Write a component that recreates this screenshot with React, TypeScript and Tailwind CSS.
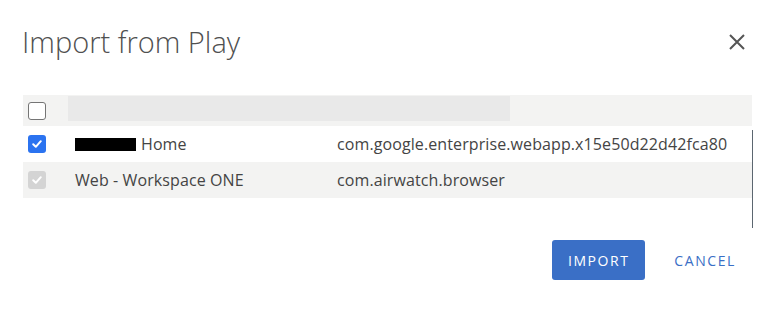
import React from 'react';

const CheckBox: React.FC<{ state: 'empty' | 'checked' | 'disabled' }> = ({ state }) => {
  if (state === 'empty') {
    return <span className="block w-[18px] h-[18px] rounded-[3px] border-[1.5px] border-[#757575] bg-white" />;
  }
  const bg = state === 'checked' ? 'bg-[#2b73f0]' : 'bg-[#d4d4d4]';
  return (
    <span className={`flex items-center justify-center w-[18px] h-[18px] rounded-[3px] ${bg}`}>
      <svg width="12" height="12" viewBox="0 0 12 12" fill="none">
        <path d="M2.2 6.3 L4.8 8.8 L9.8 3.2" stroke="white" strokeWidth="2" strokeLinecap="round" strokeLinejoin="round" />
      </svg>
    </span>
  );
};

const rows = [
  { state: 'checked' as const, redacted: true, name: 'Home', pkg: 'com.google.enterprise.webapp.x15e50d22d42fca80', bg: 'bg-white' },
  { state: 'disabled' as const, redacted: false, name: 'Web - Workspace ONE', pkg: 'com.airwatch.browser', bg: 'bg-[#f3f3f2]' },
];

export default function App() {
  return (
    <div
      className="w-[782px] h-[312px] bg-white text-[#444] overflow-hidden"
      style={{ fontFamily: '"Open Sans", "Liberation Sans", sans-serif' }}
    >
      <div className="flex items-center justify-between pl-[22px] pr-[36px] pt-[20px] h-[62px]">
        <h1 className="text-[29px] font-light text-[#505050] leading-none">Import from Play</h1>
        <svg width="18" height="18" viewBox="0 0 18 18" className="mt-[1px]">
          <path d="M2 2 L16 16 M16 2 L2 16" stroke="#555" strokeWidth="2" />
        </svg>
      </div>

      <div className="flex items-start ml-[23px] mt-[33px]">
        <div className="w-[729px]">
          <div className="flex h-[31px] bg-[#f3f3f2]">
            <div className="w-[45px] flex items-center pl-[5px]">
              <CheckBox state="empty" />
            </div>
            <div className="w-[442px] h-[25px] mt-[1px] bg-[#e9e9e9]" />
          </div>
          {rows.map((r) => (
            <div key={r.pkg} className={`flex items-center h-[36px] text-[16px] tracking-[0.1px] ${r.bg}`}>
              <div className="w-[52px] flex items-center pl-[5px]">
                <CheckBox state={r.state} />
              </div>
              <div className="w-[262px] flex items-center">
                {r.redacted && <span className="inline-block w-[61px] h-[13px] bg-black mr-[5px]" />}
                <span>{r.name}</span>
              </div>
              <div>{r.pkg}</div>
            </div>
          ))}
        </div>
        <div className="w-px h-[98px] mt-[35px] bg-[#5b6670]" />
      </div>

      <div className="flex items-center justify-end pr-[46px] mt-[12px]">
        <button className="w-[93px] h-[40px] rounded-[3px] bg-[#3a6fc6] text-white text-[14px] tracking-[1.6px] font-normal">
          IMPORT
        </button>
        <button className="ml-[29px] text-[#3a6fc6] text-[14px] tracking-[1.6px]">CANCEL</button>
      </div>
    </div>
  );
}
